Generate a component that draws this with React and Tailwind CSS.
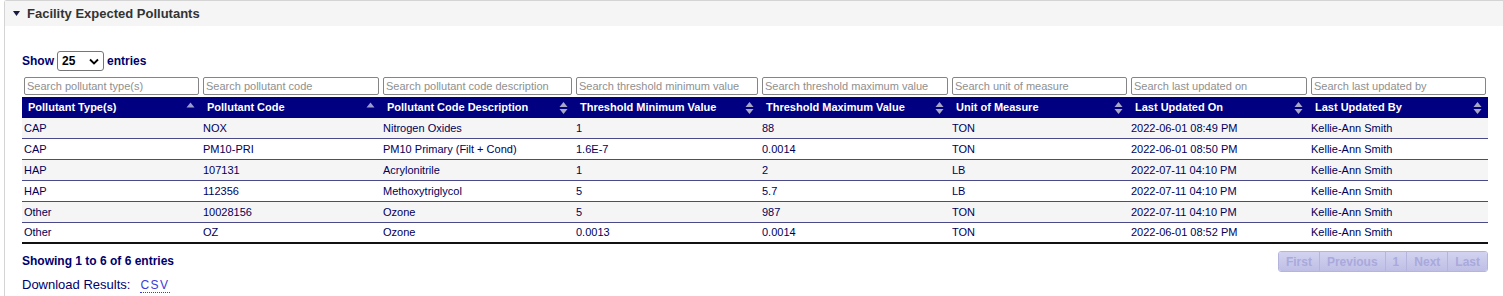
import React from "react";

const columns = [
  { label: "Pollutant Type(s)", search: "Search pollutant type(s)", w: 179, sort: "asc" },
  { label: "Pollutant Code", search: "Search pollutant code", w: 180, sort: "asc" },
  { label: "Pollutant Code Description", search: "Search pollutant code description", w: 193, sort: "both" },
  { label: "Threshold Minimum Value", search: "Search threshold minimum value", w: 186, sort: "both" },
  { label: "Threshold Maximum Value", search: "Search threshold maximum value", w: 190, sort: "both" },
  { label: "Unit of Measure", search: "Search unit of measure", w: 179, sort: "both" },
  { label: "Last Updated On", search: "Search last updated on", w: 180, sort: "both" },
  { label: "Last Updated By", search: "Search last updated by", w: 179, sort: "both" },
];

const rows = [
  ["CAP", "NOX", "Nitrogen Oxides", "1", "88", "TON", "2022-06-01 08:49 PM", "Kellie-Ann Smith"],
  ["CAP", "PM10-PRI", "PM10 Primary (Filt + Cond)", "1.6E-7", "0.0014", "TON", "2022-06-01 08:50 PM", "Kellie-Ann Smith"],
  ["HAP", "107131", "Acrylonitrile", "1", "2", "LB", "2022-07-11 04:10 PM", "Kellie-Ann Smith"],
  ["HAP", "112356", "Methoxytriglycol", "5", "5.7", "LB", "2022-07-11 04:10 PM", "Kellie-Ann Smith"],
  ["Other", "10028156", "Ozone", "5", "987", "TON", "2022-07-11 04:10 PM", "Kellie-Ann Smith"],
  ["Other", "OZ", "Ozone", "0.0013", "0.0014", "TON", "2022-06-01 08:52 PM", "Kellie-Ann Smith"],
];

function SortIcon({ type }) {
  if (type === "asc") {
    return (
      <svg width="9" height="14" viewBox="0 0 9 14" className="shrink-0">
        <path d="M0.5 6.5 L4.5 1.5 L8.5 6.5 Z" fill="#9d9dd0" />
      </svg>
    );
  }
  return (
    <svg width="9" height="14" viewBox="0 0 9 14" className="shrink-0">
      <path d="M0.5 6 L4.5 1 L8.5 6 Z" fill="#a8a8c4" />
      <path d="M0.5 8 L4.5 13 L8.5 8 Z" fill="#a8a8c4" />
    </svg>
  );
}

export default function App() {
  return (
    <div className="w-[1503px] h-[296px] bg-white overflow-hidden font-['Liberation_Sans',Arial,sans-serif]">
      <div className="ml-[4px] border-l border-t border-[#d4d4d4] rounded-tl-[3px]">
        {/* Panel header */}
        <div className="h-[25px] bg-[#f5f5f5] flex items-center pl-[8px] gap-[7px]">
          <svg width="7" height="5" viewBox="0 0 7 5">
            <path d="M0 0 L7 0 L3.5 5 Z" fill="#1a1a40" />
          </svg>
          <span className="text-[13px] font-bold text-[#333]">Facility Expected Pollutants</span>
        </div>

        <div className="pl-[17px] pt-[25px]">
          {/* Length control */}
          <div className="flex items-center gap-[3px] text-[12px] font-bold text-[#00006b] h-[20px]">
            <span>Show</span>
            <div className="w-[47px] h-[20px] border border-[#767676] rounded-[3px] flex items-center justify-between px-[4px] text-black">
              <span>25</span>
              <svg width="10" height="7" viewBox="0 0 10 7">
                <path d="M1 1.5 L5 5.5 L9 1.5" stroke="#000" strokeWidth="1.8" fill="none" />
              </svg>
            </div>
            <span>entries</span>
          </div>

          {/* Table */}
          <div className="w-[1466px] mt-[6px]">
            <div className="flex h-[20px] items-start">
              {columns.map((c) => (
                <div key={c.label} style={{ width: c.w }} className="pl-[2px] pr-[2px]">
                  <div className="h-[18px] border border-[#858585] rounded-[2px] flex items-center px-[2px] text-[11px] text-[#8f8f8f] whitespace-nowrap overflow-hidden">
                    {c.search}
                  </div>
                </div>
              ))}
            </div>
            <div className="flex h-[21px] bg-[#000080] text-white text-[11px] font-bold">
              {columns.map((c) => (
                <div
                  key={c.label}
                  style={{ width: c.w }}
                  className="flex items-center justify-between pl-[6px] pr-[6px] whitespace-nowrap"
                >
                  <span>{c.label}</span>
                  <SortIcon type={c.sort} />
                </div>
              ))}
            </div>
            {rows.map((r, i) => (
              <div
                key={i}
                className={`flex h-[21px] text-[11px] text-[#00005a] ${
                  i % 2 === 0 ? "bg-[#f5f5f5]" : "bg-white"
                } ${i === rows.length - 1 ? "border-b-2 border-[#111111]" : "border-b border-[#4a4a8a]"}`}
              >
                {r.map((v, j) => (
                  <div key={j} style={{ width: columns[j].w }} className="flex items-center pl-[2px] whitespace-nowrap">
                    {v}
                  </div>
                ))}
              </div>
            ))}
          </div>

          {/* Footer */}
          <div className="w-[1466px] flex justify-between items-start mt-[7px]">
            <div className="text-[#00006b]">
              <div className="font-bold text-[12px] h-[20px] flex items-center">Showing 1 to 6 of 6 entries</div>
              <div className="h-[22px] flex items-center mt-[3px] text-[13px]">
                <span>Download Results:</span>
                <span className="ml-[10px] text-[#3b3bd6] text-[12px] tracking-[1.5px] border-b border-dotted border-[#3b3bd6] leading-[14px]">
                  CSV
                </span>
              </div>
            </div>
            <div className="flex h-[21px] text-[12px] font-bold text-[#a9a9dc] rounded-[3px] overflow-hidden border border-[#b4b4dc]">
              {["First", "Previous", "1", "Next", "Last"].map((p, i) => (
                <div
                  key={p}
                  className={`flex items-center px-[7px] bg-gradient-to-b from-[#d2d2f0] to-[#bfbfe6] ${
                    i > 0 ? "border-l border-[#b4b4dc]" : ""
                  }`}
                >
                  {p}
                </div>
              ))}
            </div>
          </div>
        </div>
      </div>
    </div>
  );
}
